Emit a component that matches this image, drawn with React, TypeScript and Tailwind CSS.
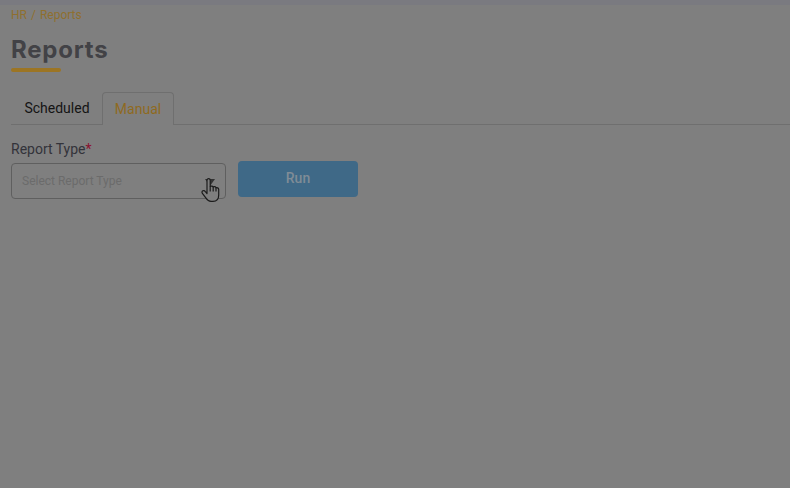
import React from "react";

const HandCursor = () => (
  <svg
    className="absolute left-[188px] top-[13px]"
    width="22"
    height="26"
    viewBox="0 0 22 26"
    fill="#7f7f7f"
    stroke="#1c1c1c"
    strokeWidth="1.2"
    strokeLinejoin="round"
  >
    <path d="M7 15V3.5C7 2.4 7.7 1.7 8.6 1.7C9.5 1.7 10.2 2.4 10.2 3.5V9.5C10.8 8.9 12.6 8.9 13.2 10C14 9.3 15.6 9.6 16 10.8C17 10.3 18.6 10.9 18.7 12.4V18C18.7 21.5 17 24.4 13 24.4H11C8.5 24.4 7.3 23.2 6 21.2L2.4 16.4C1.6 15.3 2 14.2 2.9 13.8C3.8 13.4 4.7 13.7 5.4 14.6L7 16.5Z" />
    <path d="M10.2 9.5V14.5M13.2 10V14.5M16 10.8V14.5" fill="none" />
  </svg>
);

const App = () => {
  return (
    <div className="flex h-[488px] w-[790px] flex-col overflow-hidden bg-[#7f7f7f] font-['Roboto',sans-serif]">
      <div className="h-[5px] bg-[#7a7a80]" />
      <div className="pl-[11px] pt-[3px]">
        <div className="text-[12px] leading-[14px] text-[#8f6f2e]">
          HR<span className="mx-[4px]">/</span>Reports
        </div>
        <h1 className="mt-[14px] font-['Inter',sans-serif] text-[24px] font-bold leading-[28px] tracking-[0.8px] text-[#424246]">
          Reports
        </h1>
        <div className="mt-[4px] h-[4px] w-[50px] rounded-full bg-[#9c7524]" />

        <div className="mt-[20px] flex h-[33px] border-b border-[#6f6f6f] pl-[1px]">
          <div className="flex w-[90px] items-center justify-center pt-[1px] text-[14px] text-[#141414]">
            Scheduled
          </div>
          <div className="flex h-[33px] w-[72px] items-center justify-center rounded-t-[4px] border border-b-0 border-[#6f6f6f] bg-[#7f7f7f] pt-[1px] text-[14px] text-[#8f6a1e]">
            Manual
          </div>
        </div>

        <div className="mt-[15px] text-[14px] leading-[18px] text-[#33333a]">
          Report Type<span className="text-[#8a1230]">*</span>
        </div>
        <div className="flex items-start gap-[12px]">
          <div className="relative mt-[5px] flex h-[36px] w-[215px] items-center rounded-[4px] border border-[#5f5f5f] pl-[10px] text-[12px] text-[#6b6b6b]">
            Select Report Type
            <span className="absolute right-[10px] top-[15px] h-0 w-0 border-x-[5px] border-t-[7px] border-x-transparent border-t-[#333333]" />
            <HandCursor />
          </div>
          <div className="mt-[3px] flex h-[36px] w-[120px] items-center justify-center rounded-[4px] bg-[#3f6987] pb-[1px] text-[14px] font-medium text-[#808c96]">
            Run
          </div>
        </div>
      </div>
    </div>
  );
};

export default App;
